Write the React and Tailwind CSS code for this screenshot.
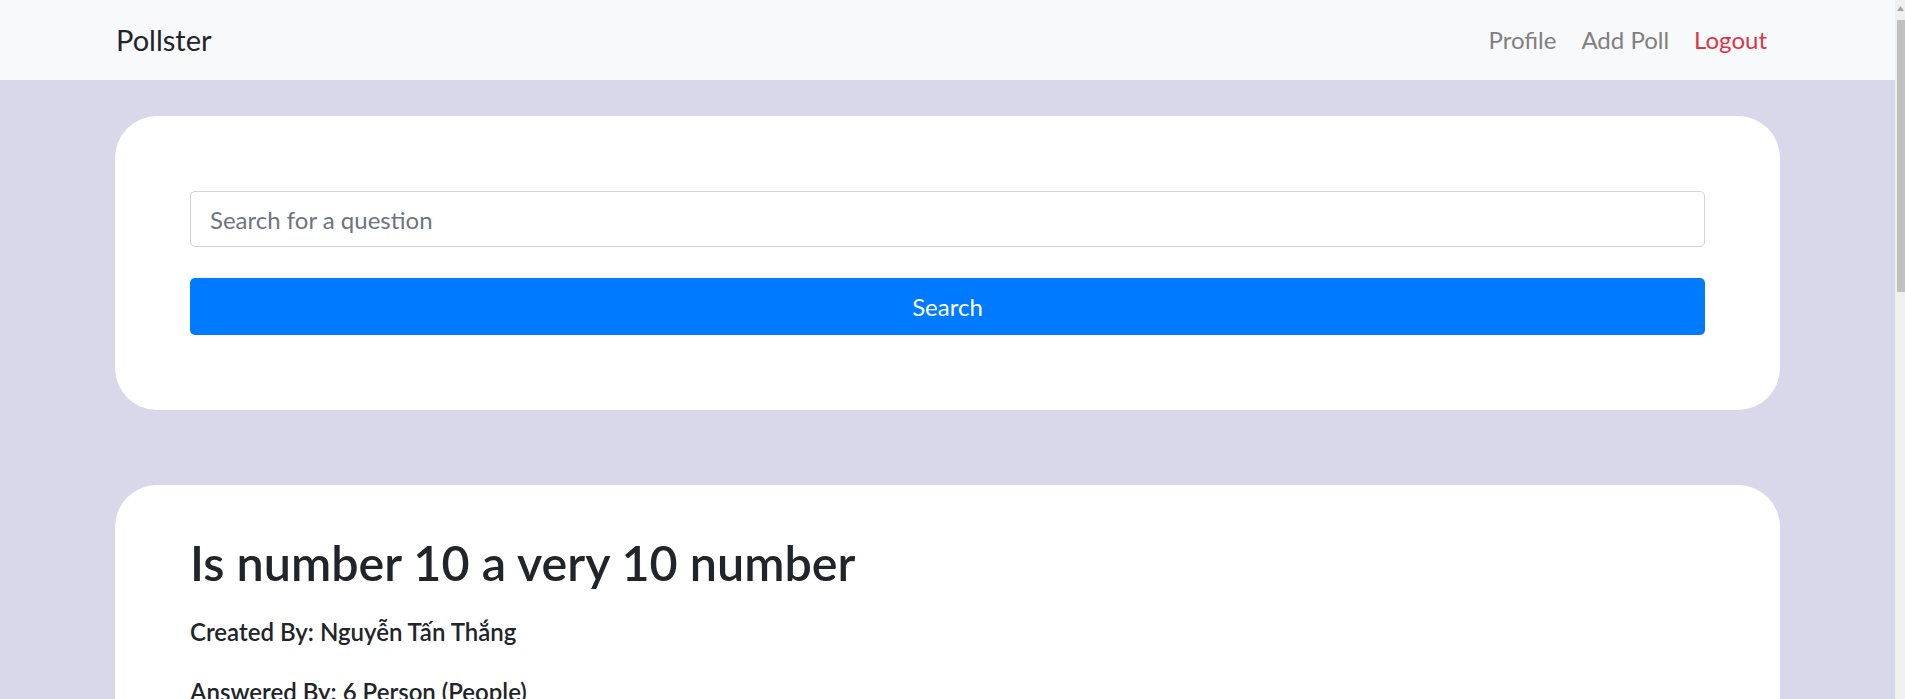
import React from 'react';

const NavLink = ({ children, danger }) => (
  <a href="#" className={danger ? 'text-[#dc3545]' : 'text-[#808080]'}>
    {children}
  </a>
);

const App = () => {
  return (
    <div className="h-[699px] flex overflow-hidden bg-[#d8d8ea] text-[#212529] font-['Lato',sans-serif]">
      <div className="flex-1 min-w-0">
        {/* Navbar */}
        <nav className="h-20 bg-[#f8f9fa] flex items-center justify-between pl-[116px] pr-[128px]">
          <a href="#" className="text-[29px] leading-none text-[#212529] mb-[1px]">Pollster</a>
          <div className="flex items-center gap-[25px] text-[24px] leading-none">
            <NavLink>Profile</NavLink>
            <NavLink>Add Poll</NavLink>
            <NavLink danger>Logout</NavLink>
          </div>
        </nav>

        <main className="px-[115px] pt-9 flex flex-col gap-[75px]">
          {/* Search card */}
          <div className="bg-white rounded-[42px] p-[75px]">
            <input
              type="text"
              placeholder="Search for a question"
              className="w-full h-[56px] border border-[#ced4da] rounded-[5px] px-[19px] pt-[1px] text-[24px] placeholder-[#6c757d] outline-none"
            />
            <button className="mt-[31px] w-full h-[57px] bg-[#007bff] text-white text-[24px] rounded-[5px] pt-[1px]">
              Search
            </button>
          </div>

          {/* Poll card */}
          <div className="bg-white rounded-[42px] px-[75px] pt-[48px] pb-[75px]">
            <h1 className="text-[48.5px] font-semibold leading-[1.2] mb-[23px]">Is number 10 a very 10 number</h1>
            <p className="text-[24px] font-semibold leading-[36px] mb-[24px]">Created By: Nguyễn Tấn Thắng</p>
            <p className="text-[24px] font-semibold leading-[36px] mb-[24px]">Answered By: 6 Person (People)</p>
          </div>
        </main>
      </div>

      {/* Scrollbar */}
      <div className="w-[10px] bg-[#f0f0f0] flex flex-col items-end">
        <div className="h-[17px] w-full flex items-center justify-end pr-[1px]">
          <svg width="7" height="5" viewBox="0 0 7 5"><path d="M0 5L3.5 0L7 5Z" fill="#a3a3a3" /></svg>
        </div>
        <div className="mt-[3px] h-[272px] w-[8px] bg-[#c1c1c1]" />
      </div>
    </div>
  );
};

export default App;
